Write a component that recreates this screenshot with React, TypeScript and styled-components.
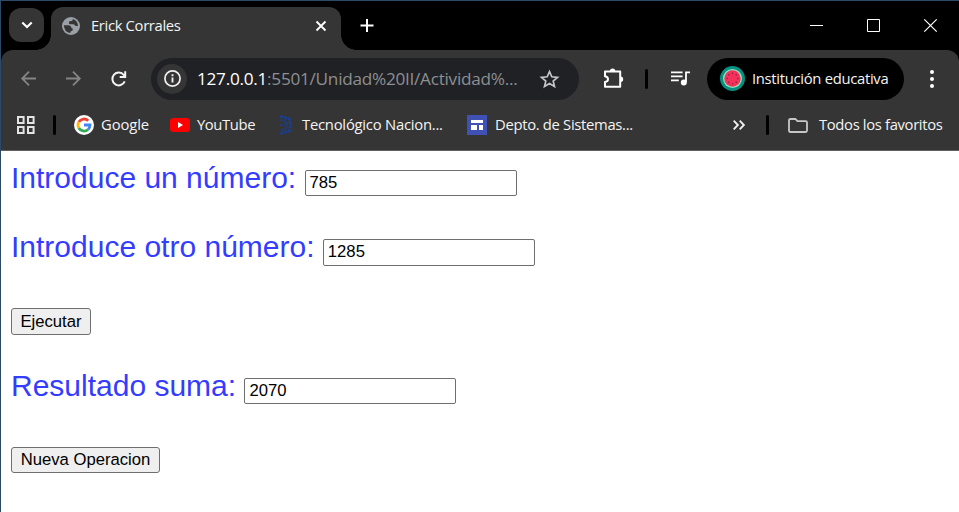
import React from "react";
import styled, { createGlobalStyle } from "styled-components";

const Global = createGlobalStyle`
  * { box-sizing: border-box; }
  body { margin: 0; background: #fff; overflow: hidden; }
`;

const uiFont = `"Open Sans", "Noto Sans", sans-serif`;

const Window = styled.div`
  width: 959px;
  height: 512px;
  border-left: 1px solid #2b4a68;
  border-top: 1px solid #2b4a68;
  background: #000;
  display: flex;
  flex-direction: column;
  overflow: hidden;
`;

const TabStrip = styled.header`
  height: 49px;
  display: flex;
  align-items: flex-start;
  background: #000;
`;

const TabSearch = styled.button`
  width: 35px;
  height: 34px;
  margin: 7px 0 0 8px;
  padding: 0;
  border: 0;
  border-radius: 12px;
  background: #353535;
  display: grid;
  place-items: center;
`;

const Tab = styled.div`
  position: relative;
  width: 290px;
  height: 43px;
  margin: 6px 0 0 7px;
  border-radius: 12px 12px 0 0;
  background: #353535;
  display: flex;
  align-items: center;
  padding: 0 0 6px 11px;

  &::before,
  &::after {
    content: "";
    position: absolute;
    bottom: 0;
    width: 15px;
    height: 15px;
  }
  &::before {
    left: -15px;
    background: radial-gradient(circle at 0 0, transparent 14.5px, #353535 15px);
  }
  &::after {
    right: -15px;
    background: radial-gradient(circle at 100% 0, transparent 14.5px, #353535 15px);
  }
`;

const NewTab = styled.button`
  display: flex;
  margin: 18px 0 0 19px;
  padding: 0;
  border: 0;
  background: none;
`;

const Label = styled.span<{ $w: number; $gap?: number; $track?: number }>`
  flex: none;
  width: ${(p) => p.$w}px;
  margin: 0 0 2px ${(p) => p.$gap ?? 7}px;
  font: 400 14.8px/20px ${uiFont};
  letter-spacing: ${(p) => p.$track ?? -0.35}px;
  color: #f4f4f4;
  white-space: nowrap;
`;

const Url = styled.span`
  flex: none;
  width: 325px;
  margin-left: 10px;
  font: 400 17.2px/20px ${uiFont};
  letter-spacing: -0.27px;
  color: #8d8f92;
  white-space: nowrap;
`;

const Icon = styled.svg<{ $gap?: number }>`
  display: block;
  flex: none;
  margin-left: ${(p) => p.$gap ?? 0}px;
  overflow: visible;
`;

const WindowControls = styled.div`
  display: flex;
  align-items: center;
  gap: 44px;
  margin: 18px 22px 0 auto;
`;

const Chrome = styled.div`
  height: 101px;
  flex: none;
  background: #353535;
  border-radius: 12px 12px 0 0;
  border-bottom: 1px solid #606060;
`;

const Toolbar = styled.nav`
  height: 57px;
  display: flex;
  align-items: center;
`;

const AddressBar = styled.div`
  width: 428px;
  height: 42px;
  margin-left: 24px;
  border-radius: 21px;
  background: #202124;
  display: flex;
  align-items: center;
`;

const SiteInfo = styled.div`
  width: 30px;
  height: 30px;
  margin-left: 6px;
  border-radius: 50%;
  background: #353535;
  display: grid;
  place-items: center;
`;

const Host = styled.span`
  color: #fff;
`;

const Divider = styled.i<{ $gap: number }>`
  flex: none;
  width: 3px;
  height: 20px;
  margin-left: ${(p) => p.$gap}px;
  border-radius: 1.5px;
  background: #000;
`;

const Profile = styled.div`
  width: 197px;
  height: 42px;
  margin-left: 17px;
  border-radius: 21px;
  background: #000;
  display: flex;
  align-items: center;
`;

const Bookmarks = styled.nav`
  height: 36px;
  display: flex;
  align-items: center;
`;

const Page = styled.main`
  flex: 1;
  background: #fff;
  padding-left: 10px;
  display: flex;
  flex-direction: column;
  align-items: flex-start;
`;

const Field = styled.label<{ $top: number }>`
  display: flex;
  align-items: baseline;
  height: 35px;
  margin-top: ${(p) => p.$top}px;
  font: 30px/35px "Liberation Sans", Arial, sans-serif;
  color: #333cff;
  white-space: pre;
`;

const Input = styled.input<{ $h?: number }>`
  width: 212px;
  height: ${(p) => p.$h ?? 26}px;
  padding: 1px 4px;
  border: 1px solid #6f6f6f;
  border-radius: 2px;
  background: #fff;
  color: #000;
  font: 16.67px/20px "Liberation Sans", Arial, sans-serif;
  outline: 0;
`;

const Button = styled.button<{ $w: number; $h: number; $top: number }>`
  width: ${(p) => p.$w}px;
  height: ${(p) => p.$h}px;
  margin-top: ${(p) => p.$top}px;
  padding: 0;
  border: 1px solid #6f6f6f;
  border-radius: 3px;
  background: #efefef;
  color: #000;
  font: 16.67px/20px "Liberation Sans", Arial, sans-serif;
  white-space: nowrap;
`;

const seeds = [0, 45, 90, 135, 180, 225, 270, 315];

export default function App() {
  return (
    <>
      <Global />
      <Window>
        <TabStrip>
          <TabSearch aria-label="Buscar pestañas">
            <Icon width="12" height="8" viewBox="0 0 12 8" fill="none" stroke="#fff" strokeWidth="2.1">
              <path d="M1.3 1.5 6 6.1l4.7-4.6" />
            </Icon>
          </TabSearch>
          <Tab>
            <Icon width="18" height="18" viewBox="0 0 18 18">
              <circle cx="9" cy="9" r="9" fill="#9aa0a6" />
              <path
                d="M1.8 8.2h5q2.2.3 2.4 2.1.2 1.3 1.5 1.3v1.8q-2.3-.1-2.5 2.6-5.8-.8-6.4-7.8zM10.8 2q5 1.6 5.2 7h-2.6q-.5-1.7-2.2-1.7H8.4q-1.7-.3-1.6-1.7.1-1.5 1.7-1.6h1q1.3-.2 1.3-2z"
                fill="#353535"
              />
            </Icon>
            <Label $w={90} $gap={11}>Erick Corrales</Label>
            <Icon $gap={135} width="10" height="10" viewBox="0 0 10 10" stroke="#fff" strokeWidth="1.8">
              <path d="m.5.5 9 9m0-9-9 9" />
            </Icon>
          </Tab>
          <NewTab aria-label="Nueva pestaña">
            <Icon width="14" height="13" viewBox="0 0 14 13" stroke="#fff" strokeWidth="2">
              <path d="M.5 6.5h13M7 0v13" />
            </Icon>
          </NewTab>
          <WindowControls>
            <Icon width="13" height="13" viewBox="0 0 13 13" stroke="#fff">
              <path d="M0 6.5h13" />
            </Icon>
            <Icon width="13" height="13" viewBox="0 0 13 13" stroke="#fff" fill="none">
              <path d="M.5.5h12v12H.5z" />
            </Icon>
            <Icon width="13" height="13" viewBox="0 0 13 13" stroke="#fff" strokeWidth="1.2">
              <path d="m.3.3 12.4 12.4m0-12.4L.3 12.7" />
            </Icon>
          </WindowControls>
        </TabStrip>

        <Chrome>
          <Toolbar>
            <Icon $gap={20} width="15" height="15" viewBox="0 0 15 15" fill="none" stroke="#858585" strokeWidth="1.8">
              <path d="M15 7.5H1.5M8 .7 1.2 7.5 8 14.3" />
            </Icon>
            <Icon $gap={30} width="15" height="15" viewBox="0 0 15 15" fill="none" stroke="#858585" strokeWidth="1.8">
              <path d="M0 7.5h13.5M7 .7l6.8 6.8L7 14.3" />
            </Icon>
            <Icon $gap={30} width="16" height="16" viewBox="0 0 16 16" fill="none" stroke="#f5f5f5" strokeWidth="2">
              <path d="M13.7 10.4A6.4 6.4 0 1 1 12.8 4L14 5.5M14.2.3v5.7H8.7" />
            </Icon>
            <AddressBar>
              <SiteInfo>
                <Icon width="17" height="17" viewBox="0 0 17 17" fill="none" stroke="#f0f0f0">
                  <circle cx="8.5" cy="8.5" r="7.6" strokeWidth="1.7" />
                  <path d="M8.5 7.6v5M8.5 4.3v1.9" strokeWidth="1.9" />
                </Icon>
              </SiteInfo>
              <Url>
                <Host>127.0.0.1</Host>:5501/Unidad%20II/Actividad%...
              </Url>
              <Icon $gap={18} width="19" height="18" viewBox="0 0 19 18" fill="none" stroke="#c5c5c5" strokeWidth="1.7">
                <path d="m9.5 1.6 2.3 5.2 5.7.5-4.3 3.8 1.3 5.5-5-3-5 3 1.3-5.5-4.3-3.8 5.7-.5z" />
              </Icon>
            </AddressBar>
            <Icon $gap={24} width="21" height="21" viewBox="0 0 21 21">
              <path
                d="M2 3.6h15.2v15.2H2v-4.7q3-.6 3-2.9T2 8.3z"
                fill="none"
                stroke="#fff"
                strokeWidth="2"
                strokeLinejoin="round"
              />
              <path d="M6.9 3.2a2.7 2.7 0 0 1 5.4 0zM17.5 8.5a2.7 2.7 0 0 1 0 5.4z" fill="#fff" />
            </Icon>
            <Divider $gap={21} />
            <Icon $gap={23} width="19" height="15" viewBox="0 0 19 15" stroke="#fff" fill="none" strokeWidth="1.8">
              <path d="M0 1.4h11.6M0 5.3h11.6M0 9.3h7.8M15 11V1.4h4" />
              <circle cx="12.8" cy="11.4" r="3" fill="#fff" stroke="none" />
            </Icon>
            <Profile>
              <Icon $gap={13} width="25" height="25" viewBox="0 0 25 25">
                <circle cx="12.5" cy="12.5" r="12.5" fill="#078f80" />
                <circle cx="12.5" cy="12.5" r="9.5" fill="#90e4bd" />
                <circle cx="12.5" cy="12.5" r="8.2" fill="#f62f5b" />
                {seeds.map((a) => (
                  <circle key={a} cx="12.5" cy="7.2" r=".65" fill="#6b2139" transform={`rotate(${a} 12.5 12.5)`} />
                ))}
              </Icon>
              <Label $w={140} $gap={7} $track={-0.3}>Institución educativa</Label>
            </Profile>
            <Icon $gap={26} width="4" height="18" viewBox="0 0 4 18" fill="#fff">
              <circle cx="2" cy="2" r="2" />
              <circle cx="2" cy="9" r="2" />
              <circle cx="2" cy="16" r="2" />
            </Icon>
          </Toolbar>

          <Bookmarks>
            <Icon $gap={15} width="19" height="18" viewBox="0 0 19 18" fill="none" stroke="#e3e3e3" strokeWidth="2">
              <path d="M2 1h5.6v6H2zM12 1h5.6v6H12zM2 11h5.6v6H2zM12 11h5.6v6H12z" />
            </Icon>
            <Divider $gap={18} />
            <Icon $gap={18} width="20" height="20" viewBox="0 0 20 20">
              <circle cx="10" cy="10" r="10" fill="#fff" />
              <g fill="none" strokeWidth="2.8">
                <path d="M4.8 7a6 6 0 0 1 9.4-1.3" stroke="#ea4335" />
                <path d="M4.8 13a6 6 0 0 1 0-6" stroke="#fbbc05" />
                <path d="M14 14.5A6 6 0 0 1 4.8 13" stroke="#34a853" />
                <path d="M10 10h6q0 2.8-2 4.5" stroke="#4285f4" />
              </g>
            </Icon>
            <Label $w={50} $track={-0.1}>Google</Label>
            <Icon $gap={19} width="20" height="14" viewBox="0 0 20 14">
              <rect width="20" height="14" rx="3.5" fill="#f00" />
              <path d="m8 4 5 3-5 3z" fill="#fff" />
            </Icon>
            <Label $w={60} $track={-0.4}>YouTube</Label>
            <Icon $gap={22} width="14" height="20" viewBox="0 0 14 20" fill="none" stroke="#1b3f8c">
              <path d="M1 1.7h3l3 1.5 3.5.8.5 3.5 1 2.5-1 2.5-.5 3.5-3.5.8-3 1.5H1" strokeWidth="2.6" strokeDasharray="3.4 .7" />
              <path d="M1 5h3l4 3v4l-4 3H1M1 10h3M5.5 9.5h3" strokeWidth="1.6" strokeDasharray="2.5 .8" />
            </Icon>
            <Label $w={142} $gap={9} $track={-0.23}>Tecnológico Nacion...</Label>
            <Icon $gap={23} width="20" height="20" viewBox="0 0 20 20">
              <path d="M0 0h20v20H0z" fill="#3f51b5" />
              <path d="M4 5h12v3H4zM4 10h6v5H4zM12 10h4v5h-4z" fill="#fff" />
            </Icon>
            <Label $w={140} $gap={8} $track={-0.31}>Depto. de Sistemas...</Label>
            <Icon $gap={98} width="12" height="10" viewBox="0 0 12 10" fill="none" stroke="#f2f2f2" strokeWidth="1.8">
              <path d="m.7.7 4.2 4.3-4.2 4.3M6.7.7l4.2 4.3-4.2 4.3" />
            </Icon>
            <Divider $gap={21} />
            <Icon $gap={19} width="20" height="15" viewBox="0 0 20 15" fill="none" stroke="#c7c7c7" strokeWidth="1.8">
              <path d="M1 2.4Q1 1 2.4 1h5l2 2.2h8.2Q19 3.2 19 4.6v8q0 1.4-1.4 1.4H2.4Q1 14 1 12.6z" />
            </Icon>
            <Label $w={130} $gap={11} $track={-0.34}>Todos los favoritos</Label>
          </Bookmarks>
        </Chrome>

        <Page>
          <Field $top={9}>
            Introduce un número: <Input defaultValue="785" />
          </Field>
          <Field $top={34}>
            Introduce otro número: <Input $h={27} defaultValue="1285" />
          </Field>
          <Button $w={80} $h={27} $top={44}>Ejecutar</Button>
          <Field $top={33}>
            Resultado suma: <Input defaultValue="2070" />
          </Field>
          <Button $w={149} $h={26} $top={44}>Nueva Operacion</Button>
        </Page>
      </Window>
    </>
  );
}
